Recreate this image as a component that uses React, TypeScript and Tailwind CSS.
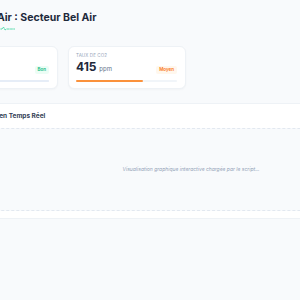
import React from 'react';

type Metric = {
  label: string;
  value: string;
  unit: string;
  status: string;
  badge: string;
  bar: string;
  pct: number;
};

const metrics: Metric[] = [
  { label: 'Indice ATMO', value: '32', unit: 'IQA', status: 'Bon', badge: 'bg-[#ecfdf5] text-[#10b981]', bar: 'bg-[#e6edf7]', pct: 100 },
  { label: 'Taux de CO2', value: '415', unit: 'ppm', status: 'Moyen', badge: 'bg-[#fff7ed] text-[#f97316]', bar: 'bg-[#fb923c]', pct: 66 },
];

const Pulse = () => (
  <svg width="75" height="5" viewBox="0 0 75 5" fill="none" stroke="#34d399" strokeWidth="0.8">
    <path d="M0 3h62l1.5-2 1.5 3 1.5-1h9" strokeDasharray="2 1.2" strokeLinecap="round" strokeLinejoin="round" />
  </svg>
);

const App: React.FC = () => {
  return (
    <div className="w-[300px] h-[300px] overflow-hidden bg-[#f8fafc]" style={{ fontFamily: 'Inter, "Noto Sans", sans-serif' }}>
      <div className="ml-[-60px] w-[502px] pt-3">
        {/* Titre */}
        <h1 className="-ml-[3px] text-[10.5px] leading-[12px] font-bold text-[#1e293b]">
          Qualité de l'Air : Secteur Bel Air
        </h1>
        <div className="mt-[2px] h-[5px]">
          <Pulse />
        </div>

        {/* Cartes */}
        <div className="mt-[15px] grid grid-cols-4 gap-[10px]">
          {metrics.map((m) => (
            <div key={m.label} className="h-[43px] rounded-[6px] bg-white border border-[#eef2f6] shadow-[0_1px_2px_rgba(15,23,42,0.03)] pl-[7px] pr-2 pt-[6px]">
              <p className="text-[4.5px] leading-[5px] uppercase tracking-wide text-[#94a3b8]">{m.label}</p>
              <div className="mt-[3px] flex items-center justify-between h-[14px]">
                <p className="text-[12px] leading-[14px] font-bold text-[#1e293b]">
                  {m.value} <span className="text-[6px] font-normal text-[#64748b]">{m.unit}</span>
                </p>
                <span className={`mt-[4px] px-[3px] py-[2px] rounded-[2px] text-[4.5px] leading-[4px] font-semibold ${m.badge}`}>
                  {m.status}
                </span>
              </div>
              <div className="mt-[5px] h-[2px] rounded-full bg-[#f1f5f9]">
                <div className={`h-full rounded-full ${m.bar}`} style={{ width: `${m.pct}%` }} />
              </div>
            </div>
          ))}
        </div>

        {/* Graphique */}
        <div className="mt-[14px] rounded-[6px] bg-white border border-[#eef2f6] pb-[7px]">
          <div className="h-[24px] px-3 flex items-center gap-[6px]">
            <svg width="9" height="9" viewBox="0 0 24 24" fill="none" stroke="#3b82f6" strokeWidth="2.2" strokeLinecap="round" strokeLinejoin="round">
              <path d="M3 3v18h18" />
              <path d="M7 15l4-4 3 3 5-6" />
            </svg>
            <h2 className="text-[6.5px] leading-[8px] font-bold text-[#334155]">Évolution en Temps Réel</h2>
          </div>
          <div className="h-[83px] bg-[#f8fafc] border-y border-dashed border-[#e2e8f0] flex items-center justify-center">
            <p className="text-[5px] italic text-[#94a3b8]">Visualisation graphique interactive chargée par le script...</p>
          </div>
        </div>
      </div>
    </div>
  );
};

export default App;
